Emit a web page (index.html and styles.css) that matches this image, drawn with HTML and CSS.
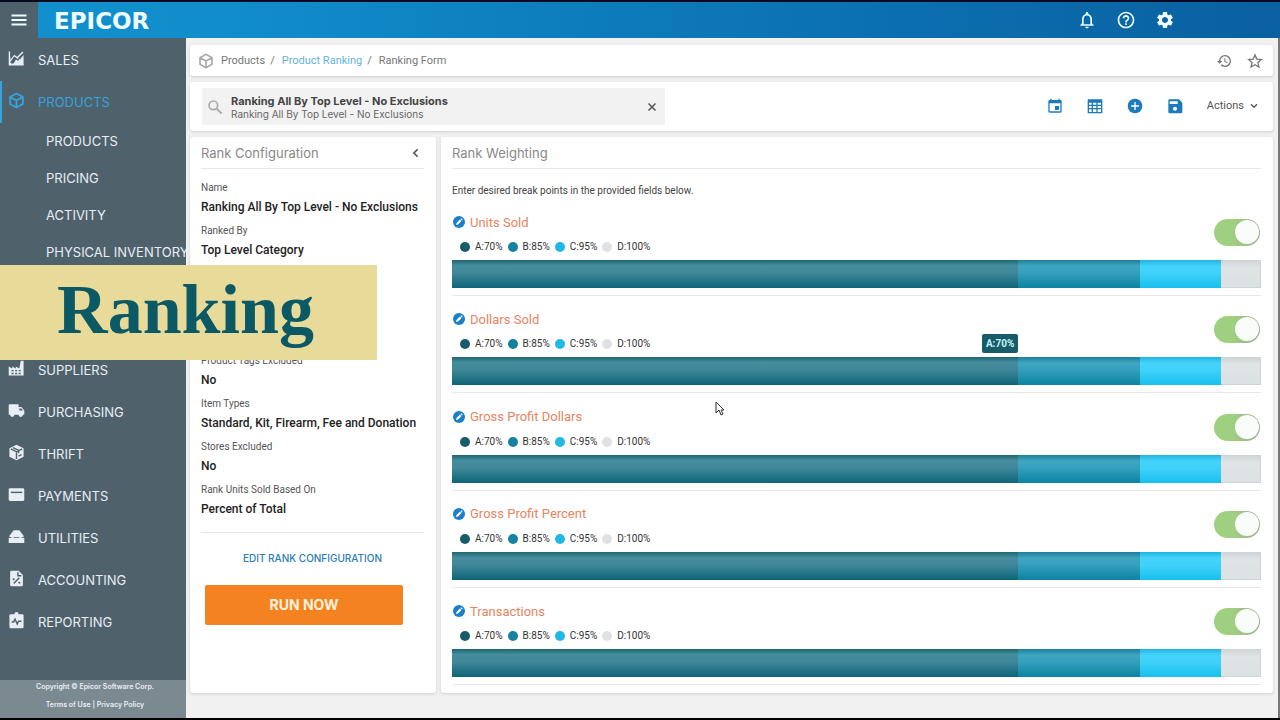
FILE: index.html
```
<!DOCTYPE html>
<html lang="en">
<head>
    <meta charset="UTF-8">
    <meta name="viewport" content="width=device-width, initial-scale=1.0">
    <title>Ranking Form</title>
    <link rel="stylesheet" href="styles.css">
</head>
<body>

    <!-- Shared icon shapes -->
    <svg class="defs" aria-hidden="true">
        <symbol id="cube" viewBox="0 0 24 24"><path d="M12 2l9 5v10l-9 5-9-5V7zM3 7l9 5 9-5M12 12v10" fill="none" stroke="currentColor" stroke-width="2.500" stroke-linejoin="round"/></symbol>
        <symbol id="pencil" viewBox="0 0 24 24"><circle cx="12" cy="12" r="12" fill="#1c80c8"/><path d="M6 18l1-4 7-7 3 3-7 7zM15 6l1.500-1.500 3 3L18 9z" fill="#fff"/></symbol>
    </svg>

    <header class="header">
        <button class="menu-button" aria-label="Menu">
            <svg viewBox="0 0 24 24"><path d="M2 6h20M2 12h20M2 18h20" fill="none" stroke="currentColor" stroke-width="2.500"/></svg>
        </button>
        <a class="logo" href="#">EPICOR</a>
        <div class="header-icons">
            <button aria-label="Notifications">
                <svg viewBox="0 0 24 24"><path fill="currentColor" d="M12 22c1.100 0 2-.9 2-2h-4c0 1.100.9 2 2 2zm6-6v-5c0-3.070-1.630-5.640-4.500-6.320V4c0-.83-.67-1.500-1.500-1.500s-1.500.67-1.500 1.500v.68C7.640 5.360 6 7.920 6 11v5l-2 2v1h16v-1l-2-2zm-2 1H8v-6c0-2.480 1.510-4.500 4-4.500s4 2.020 4 4.500v6z"/></svg>
            </button>
            <button aria-label="Help">
                <svg viewBox="0 0 24 24"><path fill="currentColor" d="M11 18h2v-2h-2v2zm1-16C6.480 2 2 6.480 2 12s4.480 10 10 10 10-4.480 10-10S17.520 2 12 2zm0 18c-4.410 0-8-3.590-8-8s3.590-8 8-8 8 3.590 8 8-3.590 8-8 8zm0-14c-2.210 0-4 1.790-4 4h2c0-1.100.9-2 2-2s2 .9 2 2c0 2-3 1.750-3 5h2c0-2.250 3-2.500 3-5 0-2.210-1.790-4-4-4z"/></svg>
            </button>
            <button aria-label="Settings">
                <svg viewBox="0 0 24 24"><path fill="currentColor" d="M19.140 12.940c.04-.3.060-.61.060-.94 0-.32-.02-.64-.07-.94l2.030-1.580c.18-.14.230-.41.120-.61l-1.920-3.320c-.12-.22-.37-.29-.59-.22l-2.390.96c-.5-.38-1.030-.7-1.620-.94l-.36-2.540c-.04-.24-.24-.41-.48-.41h-3.840c-.24 0-.43.170-.47.410l-.36 2.540c-.59.240-1.130.570-1.620.940l-2.390-.96c-.22-.08-.47 0-.59.220L2.740 8.870c-.12.210-.08.470.120.610l2.030 1.580c-.05.300-.09.630-.09.940s.02.640.070.940l-2.030 1.580c-.18.140-.23.410-.12.610l1.920 3.320c.12.220.370.290.590.220l2.390-.96c.5.380 1.030.700 1.620.940l.36 2.540c.05.240.240.410.480.410h3.840c.24 0 .440-.17.470-.41l.36-2.540c.59-.24 1.130-.56 1.620-.94l2.390.96c.22.080.470 0 .590-.22l1.920-3.320c.12-.22.070-.47-.12-.61l-2.010-1.580zM12 15.600c-1.980 0-3.600-1.620-3.600-3.600s1.620-3.600 3.600-3.600 3.600 1.620 3.600 3.600-1.620 3.600-3.600 3.600z"/></svg>
            </button>
        </div>
    </header>

    <div class="layout">

        <!-- Sidebar -->
        <aside class="sidebar">
            <nav>
                <a class="nav-item" href="#">
                    <svg viewBox="0 0 24 24"><path d="M2 3v18h20V7l-5 6-4-3-5 9H4v-3" fill="currentColor"/><path d="M2 2v19h20" fill="none" stroke="currentColor" stroke-width="2"/><path d="M3 16l6-8 4 3 8-8" fill="none" stroke="currentColor" stroke-width="2"/><path d="M4 18l5-7 5 3 7-8" fill="none" stroke="#4f616b" stroke-width="2"/></svg>
                    SALES
                </a>
                <a class="nav-item active" href="#"><svg><use href="#cube"/></svg>PRODUCTS</a>
                <div class="subnav">
                    <a href="#">PRODUCTS</a>
                    <a href="#">PRICING</a>
                    <a href="#">ACTIVITY</a>
                    <a href="#">PHYSICAL INVENTORY</a>
                </div>
                <a class="nav-item" href="#">
                    <svg viewBox="0 0 24 24"><path fill="currentColor" fill-rule="evenodd" d="M1 22V9l5 3V9l5 3V9l5 3 2-11h4v21zM5 14v2h3v-2zM10 14v2h3v-2zM15 14v2h3v-2zM5 18v2h3v-2zM10 18v2h3v-2zM15 18v2h3v-2z"/></svg>
                    SUPPLIERS
                </a>
                <a class="nav-item" href="#">
                    <svg viewBox="0 0 24 24"><path fill="currentColor" fill-rule="evenodd" d="M2 3h13v4h4l4 5v6h-2a3 3 0 0 1-6 0H9a3 3 0 0 1-6 0H1V4zM16 9v3h5l-2-3z"/><circle cx="6" cy="18" r="2" fill="currentColor"/><circle cx="18" cy="18" r="2" fill="currentColor"/></svg>
                    PURCHASING
                </a>
                <a class="nav-item" href="#">
                    <svg viewBox="0 0 24 24"><path fill="currentColor" d="M12 1l10 5v12l-10 5-10-5V6z"/><path d="M4 7l8 4 8-4M12 11v10M7 5l8 4v4M15 17l4-2" fill="none" stroke="#4f616b" stroke-width="2"/></svg>
                    THRIFT
                </a>
                <a class="nav-item" href="#">
                    <svg viewBox="0 0 24 24"><rect x="1" y="3" width="22" height="18" rx="2" fill="currentColor"/><path d="M4 9h16" stroke="#4f616b" stroke-width="2"/></svg>
                    PAYMENTS
                </a>
                <a class="nav-item" href="#">
                    <svg viewBox="0 0 24 24"><path fill="currentColor" d="M8 3h8l6 8v2H2v-2zM1 14h22v7H1z"/><path fill="currentColor" d="M5 12h3v3H5zM16 12h3v3h-3z"/></svg>
                    UTILITIES
                </a>
                <a class="nav-item" href="#">
                    <svg viewBox="0 0 24 24"><path fill="currentColor" d="M5 1h10l6 6v14a2 2 0 0 1-2 2H5a2 2 0 0 1-2-2V3a2 2 0 0 1 2-2z"/><path d="M14 3v5h5M8 19l8-8" fill="none" stroke="#4f616b" stroke-width="2"/><circle cx="8" cy="13" r="1.500" fill="#4f616b"/><circle cx="16" cy="18" r="1.500" fill="#4f616b"/></svg>
                    ACCOUNTING
                </a>
                <a class="nav-item" href="#">
                    <svg viewBox="0 0 24 24"><path fill="currentColor" d="M4 3h5a3 3 0 0 1 6 0h5a2 2 0 0 1 2 2v16a2 2 0 0 1-2 2H4a2 2 0 0 1-2-2V5a2 2 0 0 1 2-2z"/><path d="M5 14h3l2-4 3 7 2-4h4" fill="none" stroke="#4f616b" stroke-width="2"/></svg>
                    REPORTING
                </a>
            </nav>
            <footer class="footer">
                <div>Copyright © Epicor Software Corp.</div>
                <div><a href="#">Terms of Use</a> | <a href="#">Privacy Policy</a></div>
            </footer>
        </aside>

        <main class="main">

            <div class="card breadcrumb">
                <svg class="icon"><use href="#cube"/></svg>
                <a href="#">Products</a><span class="slash">/</span>
                <a class="current" href="#">Product Ranking</a><span class="slash">/</span>
                <a href="#">Ranking Form</a>
                <div class="breadcrumb-icons">
                    <button aria-label="History">
                        <svg viewBox="0 0 24 24"><path fill="currentColor" d="M13.500 3a9 9 0 0 0-9 9H1.500l4 4 4-4h-3a7 7 0 1 1 2 4.900l-1.400 1.500A9 9 0 1 0 13.500 3zM12.500 8v5l4.200 2.500.8-1.200-3.500-2.100V8z"/></svg>
                    </button>
                    <button aria-label="Favorite">
                        <svg viewBox="0 0 24 24"><path d="M12 3l2.700 6.200 6.800.6-5.100 4.500 1.500 6.700-5.900-3.500L6.100 21l1.500-6.700-5.100-4.500 6.800-.6z" fill="none" stroke="currentColor" stroke-width="2"/></svg>
                    </button>
                </div>
            </div>

            <div class="card toolbar">
                <div class="search">
                    <svg viewBox="0 0 24 24"><circle cx="9.500" cy="9.500" r="6.500" fill="none" stroke="currentColor" stroke-width="2.500"/><path d="M14 14l8 8" stroke="currentColor" stroke-width="3"/></svg>
                    <div class="search-text">
                        <input type="text" id="ranking" aria-label="Ranking" value="Ranking All By Top Level - No Exclusions">
                        <label for="ranking">Ranking All By Top Level - No Exclusions</label>
                    </div>
                    <button class="clear" aria-label="Clear">
                        <svg viewBox="0 0 24 24"><path d="M5 5l14 14M19 5L5 19" stroke="currentColor" stroke-width="3"/></svg>
                    </button>
                </div>
                <div class="tools">
                    <button aria-label="Calendar">
                        <svg viewBox="0 0 24 24"><path fill="currentColor" fill-rule="evenodd" d="M5 1h2v2h10V1h2v2h1a2 2 0 0 1 2 2v15a2 2 0 0 1-2 2H4a2 2 0 0 1-2-2V5a2 2 0 0 1 2-2h1zM4 8v12h16V8zM12 12h6v6h-6z"/></svg>
                    </button>
                    <button aria-label="Grid">
                        <svg viewBox="0 0 24 24"><path fill="currentColor" fill-rule="evenodd" d="M2 2h20a1 1 0 0 1 1 1v19a1 1 0 0 1-1 1H2a1 1 0 0 1-1-1V3a1 1 0 0 1 1-1zM3 7v3h4V7zM9 7v3h5V7zM16 7v3h5V7zM3 12v3h4v-3zM9 12v3h5v-3zM16 12v3h5v-3zM3 17v4h4v-4zM9 17v4h5v-4zM16 17v4h5v-4z"/></svg>
                    </button>
                    <button aria-label="Add">
                        <svg viewBox="0 0 24 24"><circle cx="12" cy="12" r="11" fill="currentColor"/><path d="M12 6v12M6 12h12" stroke="#fff" stroke-width="2"/></svg>
                    </button>
                    <button aria-label="Save">
                        <svg viewBox="0 0 24 24"><path fill="currentColor" fill-rule="evenodd" d="M4 2h14l5 5v14a2 2 0 0 1-2 2H4a2 2 0 0 1-2-2V4a2 2 0 0 1 2-2zM4 5v4h12V5z"/><circle cx="12" cy="16" r="3" fill="#fff"/></svg>
                    </button>
                    <button class="actions">Actions
                        <svg viewBox="0 0 24 24"><path d="M3 7l9 9 9-9" fill="none" stroke="currentColor" stroke-width="4"/></svg>
                    </button>
                </div>
            </div>

            <div class="panels">

                <!-- Rank configuration -->
                <section class="card config">
                    <div class="panel-title">
                        <h2>Rank Configuration</h2>
                        <button aria-label="Collapse">
                            <svg viewBox="0 0 24 24"><path d="M16 3l-9 9 9 9" fill="none" stroke="currentColor" stroke-width="4"/></svg>
                        </button>
                    </div>
                    <dl class="fields">
                        <div><dt>Name</dt><dd>Ranking All By Top Level - No Exclusions</dd></div>
                        <div><dt>Ranked By</dt><dd>Top Level Category</dd></div>
                        <div class="exclusions"><dt>Product Tags Excluded</dt><dd>No</dd></div>
                        <div><dt>Item Types</dt><dd>Standard, Kit, Firearm, Fee and Donation</dd></div>
                        <div><dt>Stores Excluded</dt><dd>No</dd></div>
                        <div><dt>Rank Units Sold Based On</dt><dd>Percent of Total</dd></div>
                    </dl>
                    <button class="edit-config">EDIT RANK CONFIGURATION</button>
                    <button class="run">RUN NOW</button>
                </section>

                <!-- Rank weighting -->
                <section class="card weighting">
                    <div class="panel-title">
                        <h2>Rank Weighting</h2>
                    </div>
                    <p class="hint">Enter desired break points in the provided fields below.</p>

                    <div class="weights">
                        <div class="weight">
                            <div class="weight-head">
                                <div>
                                    <h3><button aria-label="Edit Units Sold"><svg><use href="#pencil"/></svg></button>Units Sold</h3>
                                    <ul class="legend"><li class="a">A:70%</li><li class="b">B:85%</li><li class="c">C:95%</li><li class="d">D:100%</li></ul>
                                </div>
                                <input type="checkbox" class="toggle" aria-label="Units Sold" checked>
                            </div>
                            <div class="bar"><div class="seg-a"></div><div class="seg-b"></div><div class="seg-c"></div><div class="seg-d"></div></div>
                        </div>

                        <div class="weight">
                            <div class="weight-head">
                                <div>
                                    <h3><button aria-label="Edit Dollars Sold"><svg><use href="#pencil"/></svg></button>Dollars Sold</h3>
                                    <ul class="legend"><li class="a">A:70%</li><li class="b">B:85%</li><li class="c">C:95%</li><li class="d">D:100%</li></ul>
                                </div>
                                <input type="checkbox" class="toggle" aria-label="Dollars Sold" checked>
                            </div>
                            <div class="bar"><div class="seg-a"><span class="tooltip">A:70%</span></div><div class="seg-b"></div><div class="seg-c"></div><div class="seg-d"></div></div>
                        </div>

                        <div class="weight">
                            <div class="weight-head">
                                <div>
                                    <h3><button aria-label="Edit Gross Profit Dollars"><svg><use href="#pencil"/></svg></button>Gross Profit Dollars</h3>
                                    <ul class="legend"><li class="a">A:70%</li><li class="b">B:85%</li><li class="c">C:95%</li><li class="d">D:100%</li></ul>
                                </div>
                                <input type="checkbox" class="toggle" aria-label="Gross Profit Dollars" checked>
                            </div>
                            <div class="bar"><div class="seg-a"></div><div class="seg-b"></div><div class="seg-c"></div><div class="seg-d"></div></div>
                        </div>

                        <div class="weight">
                            <div class="weight-head">
                                <div>
                                    <h3><button aria-label="Edit Gross Profit Percent"><svg><use href="#pencil"/></svg></button>Gross Profit Percent</h3>
                                    <ul class="legend"><li class="a">A:70%</li><li class="b">B:85%</li><li class="c">C:95%</li><li class="d">D:100%</li></ul>
                                </div>
                                <input type="checkbox" class="toggle" aria-label="Gross Profit Percent" checked>
                            </div>
                            <div class="bar"><div class="seg-a"></div><div class="seg-b"></div><div class="seg-c"></div><div class="seg-d"></div></div>
                        </div>

                        <div class="weight">
                            <div class="weight-head">
                                <div>
                                    <h3><button aria-label="Edit Transactions"><svg><use href="#pencil"/></svg></button>Transactions</h3>
                                    <ul class="legend"><li class="a">A:70%</li><li class="b">B:85%</li><li class="c">C:95%</li><li class="d">D:100%</li></ul>
                                </div>
                                <input type="checkbox" class="toggle" aria-label="Transactions" checked>
                            </div>
                            <div class="bar"><div class="seg-a"></div><div class="seg-b"></div><div class="seg-c"></div><div class="seg-d"></div></div>
                        </div>
                    </div>
                </section>
            </div>
        </main>
    </div>

    <!-- Video caption and mouse pointer -->
    <div class="caption">Ranking</div>
    <svg class="pointer" viewBox="0 0 10 16"><path d="M1 1v11l3-3 2 5 2-1-2-4h3z" fill="#fff" stroke="#333" stroke-width="1"/></svg>

</body>
</html>
```

FILE: styles.css
```
* {
    box-sizing: border-box;
}
body {
    margin: 0;
    min-height: 100vh;
    display: flex;
    flex-direction: column;
    position: relative;
    font-family: Roboto, "Noto Sans", sans-serif;
    font-size: 12px;
    color: #333;
    background-color: #f1f1f2;
    border-top: 2px solid #050a20;
    border-bottom: 2px solid #000;
}
a {
    color: inherit;
    text-decoration: none;
}
button {
    display: flex;
    align-items: center;
    justify-content: center;
    padding: 0;
    border: none;
    background: none;
    color: inherit;
    font: inherit;
    cursor: pointer;
}
h2, h3, p, ul, dl, dd {
    margin: 0;
    padding: 0;
}
svg {
    display: block;
    flex-shrink: 0;
}
.defs {
    position: absolute;
    width: 0;
    height: 0;
}

/* Header */
.header {
    display: flex;
    align-items: center;
    height: 36px;
    color: #eefcff;
    background: linear-gradient(90deg, #128fcd 0%, #118dcb 18%, #0c77b7 55%, #0a60a0 100%);
}
.menu-button {
    width: 38px;
    height: 36px;
    background-color: #4f616b;
}
.menu-button svg {
    width: 18px;
    height: 18px;
}
.logo {
    margin-left: 16px;
    padding-top: 2px;
    font-family: "DejaVu Sans", sans-serif;
    font-size: 23px;
    font-weight: bold;
    line-height: 34px;
}
.header-icons {
    display: flex;
    gap: 19px;
    margin-left: auto;
    margin-right: 105px;
}
.header-icons svg {
    width: 20px;
    height: 20px;
}

/* Sidebar */
.layout {
    display: flex;
    flex: 1;
    border-right: 2px solid #77777b;
}
.sidebar {
    display: flex;
    flex-direction: column;
    justify-content: space-between;
    width: 186px;
    flex-shrink: 0;
    font-family: Inter, sans-serif;
    color: #e8eef5;
    background-color: #4f616b;
}
.sidebar nav {
    padding-top: 1px;
}
.nav-item {
    display: flex;
    align-items: center;
    gap: 13px;
    height: 42px;
    padding-left: 6px;
    font-size: 13px;
    border-left: 2px solid transparent;
}
.nav-item svg {
    width: 17px;
    height: 17px;
    margin-bottom: 4px;
}
.nav-item.active {
    color: #35a3dc;
    border-left-color: #35a3dc;
}
.subnav {
    height: 226px;
}
.subnav a {
    display: block;
    padding-left: 46px;
    font-size: 13px;
    line-height: 37px;
    white-space: nowrap;
}
.footer {
    display: flex;
    flex-direction: column;
    gap: 4px;
    height: 38px;
    padding-left: 4px;
    font-size: 7px;
    font-weight: 600;
    line-height: 14px;
    text-align: center;
    background-color: #7b8a91;
}

/* Cards */
.main {
    display: flex;
    flex-direction: column;
    gap: 6px;
    flex: 1;
    min-width: 0;
    padding: 7px 5px 25px 4px;
}
.card {
    background-color: #fff;
    border-radius: 3px;
    box-shadow: 0 1px 3px #ccc;
}
.breadcrumb {
    display: flex;
    align-items: center;
    height: 31px;
    padding: 0 10px 0 8px;
    font-size: 11px;
    color: #777;
}
.breadcrumb .icon {
    width: 16px;
    height: 16px;
    margin-right: 7px;
    color: #aaa;
}
.breadcrumb .current {
    color: #63b4dc;
}
.slash {
    margin: 0 7px 0 5px;
}
.breadcrumb-icons {
    display: flex;
    gap: 15px;
    margin-left: auto;
}
.breadcrumb-icons svg {
    width: 16px;
    height: 16px;
}
.toolbar {
    display: flex;
    align-items: center;
    justify-content: space-between;
    height: 49px;
    padding: 0 15px 0 12px;
}
.search {
    display: flex;
    align-items: center;
    gap: 8px;
    width: 463px;
    height: 37px;
    padding: 0 7px 0 5px;
    color: #aaa;
    background-color: #f2f2f2;
}
.search > svg {
    width: 16px;
    height: 16px;
}
.search-text {
    display: flex;
    flex: 1;
    flex-direction: column;
    font-family: Inter, sans-serif;
    font-size: 10px;
    line-height: 12px;
    color: #666;
}
.search-text input {
    height: 14px;
    padding: 0;
    border: none;
    background: none;
    font-family: inherit;
    font-size: 11px;
    font-weight: bold;
    color: #444;
}
.clear svg {
    width: 12px;
    height: 12px;
    color: #555;
}
.tools {
    display: flex;
    align-items: center;
    gap: 24px;
    padding-bottom: 2px;
    color: #1b7bbd;
}
.tools svg {
    width: 16px;
    height: 16px;
}
.tools .actions {
    gap: 6px;
    font-size: 11px;
    color: #555;
}
.tools .actions svg {
    width: 8px;
    height: 8px;
}

/* Panels */
.panels {
    display: flex;
    flex: 1;
    gap: 5px;
}
.config, .weighting {
    display: flex;
    flex-direction: column;
    padding: 0 12px 8px 11px;
}
.config {
    width: 246px;
}
.weighting {
    flex: 1;
}
.panel-title {
    display: flex;
    align-items: center;
    justify-content: space-between;
    height: 32px;
    padding-right: 3px;
    color: #555;
    border-bottom: 1px solid #e8e8e8;
}
.panel-title h2 {
    font-family: Inter, sans-serif;
    font-size: 13px;
    font-weight: normal;
    color: #888;
}
.panel-title svg {
    width: 10px;
    height: 10px;
}
.fields {
    padding: 11px 0 7px;
    border-bottom: 1px solid #e8e8e8;
}
.fields div {
    height: 43px;
}
.fields .exclusions {
    margin-top: 87px;
}
.fields dt {
    font-size: 10px;
    line-height: 16px;
    color: #555;
}
.fields dd {
    font-weight: 500;
    line-height: 22px;
    color: #222;
    white-space: nowrap;
}
.edit-config {
    height: 50px;
    margin-bottom: 2px;
    font-family: Inter, sans-serif;
    font-size: 10px;
    font-weight: 500;
    color: #2b7cb8;
}
.run {
    width: 198px;
    height: 40px;
    margin-left: 4px;
    padding-bottom: 2px;
    font-family: Inter, sans-serif;
    font-size: 14px;
    font-weight: bold;
    color: #fff3dc;
    background-color: #f58220;
    border-radius: 2px;
}
.hint {
    padding-top: 14px;
    font-size: 10px;
    line-height: 16px;
    color: #444;
}
.weights {
    display: flex;
    flex: 1;
    flex-direction: column;
}
.weight {
    display: flex;
    flex: 1;
    flex-direction: column;
    justify-content: flex-end;
    padding-bottom: 7px;
    border-bottom: 1px solid #e8e8e8;
}
.weight-head {
    display: flex;
    align-items: flex-start;
    justify-content: space-between;
    height: 48px;
    padding-right: 1px;
}
.weight h3 {
    display: flex;
    align-items: center;
    gap: 5px;
    height: 20px;
    padding-left: 1px;
    font-size: 13px;
    font-weight: normal;
    color: #e5855f;
}
.weight h3 svg {
    width: 12px;
    height: 12px;
}
.legend {
    display: flex;
    gap: 5px;
    padding: 7px 0 0 8px;
    list-style: none;
    font-size: 10px;
    line-height: 16px;
}
.legend li {
    display: flex;
    align-items: center;
    gap: 5px;
}
.legend li::before {
    content: "";
    width: 10px;
    height: 10px;
    border-radius: 50%;
}
.legend .a::before {
    background-color: #175c68;
}
.legend .b::before {
    background-color: #1582a0;
}
.legend .c::before {
    background-color: #20b8e4;
}
.legend .d::before {
    background-color: #dfe1e3;
}
.toggle {
    appearance: none;
    display: flex;
    justify-content: flex-end;
    width: 46px;
    height: 27px;
    margin: 7px 0 0;
    padding: 1px;
    border-radius: 14px;
    background: linear-gradient(90deg, #9fd07f 40%, #a3b096 90%);
}
.toggle::before {
    content: "";
    width: 24px;
    height: 24px;
    border-radius: 50%;
    background-color: #fafcfa;
}
.toggle:not(:checked) {
    justify-content: flex-start;
    background: #bbb;
}
.bar {
    display: flex;
    height: 28px;
}
.seg-a {
    position: relative;
    width: 70%;
    background: linear-gradient(#1f6673, #468d9e 20%, #40889a 45%, #0d6577);
}
.seg-b {
    width: 15%;
    background: linear-gradient(#1c7f99, #3fa6c1 22%, #35a0bd 45%, #0b83a1);
}
.seg-c {
    width: 10%;
    background: linear-gradient(#1fb4e0, #46d3fb 22%, #3dd1fa 50%, #17c0ec);
}
.seg-d {
    width: 5%;
    background: linear-gradient(#d0d6d9, #dfe4e6 25%, #dbe2e4);
    border: 1px solid #cdd3d6;
    border-left: none;
}
.tooltip {
    position: absolute;
    right: 0;
    bottom: 32px;
    padding: 0 4px;
    border-radius: 2px;
    font-size: 10px;
    font-weight: bold;
    line-height: 19px;
    color: #c5f2f8;
    background-color: #175c68;
}

/* Overlays */
.caption {
    position: absolute;
    top: 263px;
    left: 0;
    width: 377px;
    padding: 0 6px 5px 0;
    font-family: "Liberation Serif", serif;
    font-size: 70px;
    font-weight: bold;
    line-height: 90px;
    text-align: center;
    color: #0b5964;
    background-color: #e8da98;
}
.pointer {
    position: absolute;
    top: 399px;
    left: 715px;
    width: 10px;
    height: 16px;
}
```
